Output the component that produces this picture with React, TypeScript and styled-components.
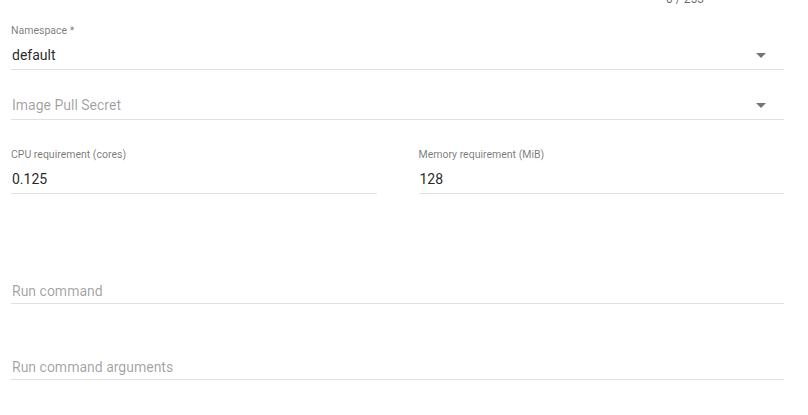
import React from "react";
import styled, { createGlobalStyle } from "styled-components";

const GlobalStyle = createGlobalStyle`
  html, body {
    margin: 0;
    padding: 0;
    background: #ffffff;
    overflow: hidden;
  }
  body {
    font-family: Roboto, "Helvetica Neue", "Liberation Sans", sans-serif;
  }
`;

const Form = styled.div`
  width: 808px;
  height: 415px;
  box-sizing: border-box;
  padding: 0 24px 0 11px;
  display: flex;
  flex-direction: column;
  overflow: hidden;
`;

const Hint = styled.div`
  margin-top: -8px;
  height: 14px;
  line-height: 14px;
  font-size: 12px;
  color: rgba(0, 0, 0, 0.6);
  text-align: right;
  padding-right: 80px;
`;

const Field = styled.div<{ $top: number; $pad?: number }>`
  margin-top: ${(p) => p.$top}px;
  display: flex;
  flex-direction: column;
  border-bottom: 1px solid #e0e0e0;
  padding-bottom: ${(p) => (p.$pad ?? 4)}px;
`;

const Label = styled.div`
  height: 14px;
  line-height: 14px;
  font-size: 10.5px;
  color: rgba(0, 0, 0, 0.54);
  margin-bottom: 7px;
  white-space: nowrap;
`;

const InputLine = styled.div`
  display: flex;
  align-items: center;
  height: 20px;
  line-height: 20px;
  font-size: 14px;
`;

const Value = styled.span`
  flex: 1;
  color: rgba(0, 0, 0, 0.87);
  padding-left: 1px;
`;

const Placeholder = styled.span`
  flex: 1;
  color: rgba(0, 0, 0, 0.38);
  padding-left: 1px;
`;

const Arrow = styled.span`
  width: 0;
  height: 0;
  border-left: 5px solid transparent;
  border-right: 5px solid transparent;
  border-top: 5px solid rgba(0, 0, 0, 0.54);
  margin-right: 18px;
`;

const Row = styled.div`
  margin-top: 28px;
  display: grid;
  grid-template-columns: 1fr 1fr;
  column-gap: 42px;
`;

const Cell = styled(Field)`
  margin-top: 0;
`;

export default function App() {
  return (
    <>
      <GlobalStyle />
      <Form>
        <Hint>0 / 253</Hint>

        <Field $top={18}>
          <Label>Namespace *</Label>
          <InputLine>
            <Value>default</Value>
            <Arrow />
          </InputLine>
        </Field>

        <Field $top={4}>
          <Label />
          <InputLine>
            <Placeholder>Image Pull Secret</Placeholder>
            <Arrow />
          </InputLine>
        </Field>

        <Row>
          <Cell $top={0}>
            <Label>CPU requirement (cores)</Label>
            <InputLine>
              <Value>0.125</Value>
            </InputLine>
          </Cell>
          <Cell $top={0}>
            <Label>Memory requirement (MiB)</Label>
            <InputLine>
              <Value>128</Value>
            </InputLine>
          </Cell>
        </Row>

        <Field $top={66} $pad={2}>
          <Label />
          <InputLine>
            <Placeholder>Run command</Placeholder>
          </InputLine>
        </Field>

        <Field $top={32} $pad={2}>
          <Label />
          <InputLine>
            <Placeholder>Run command arguments</Placeholder>
          </InputLine>
        </Field>
      </Form>
    </>
  );
}
